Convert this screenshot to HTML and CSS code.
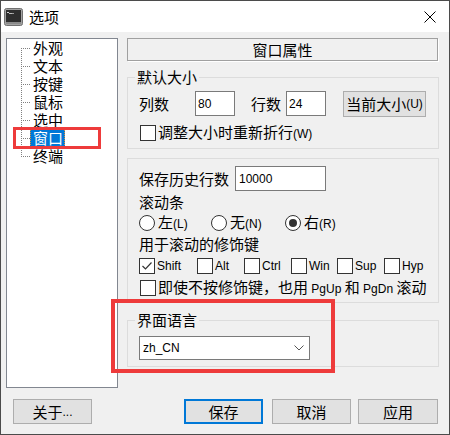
FILE: index.html
```html
<!DOCTYPE html>
<html lang="zh-CN">
<head>
<meta charset="utf-8">
<title>选项</title>
<link rel="stylesheet" href="styles.css">
</head>
<body>
<div class="window">
  <div class="titlebar">
    <svg class="app-icon" width="19" height="18" viewBox="0 0 19 18">
      <rect x="0.5" y="0.5" width="18" height="17" rx="2" fill="#a3a3a3" stroke="#707070"/>
      <rect x="2" y="2" width="15" height="12" fill="#2e2e2e"/>
      <rect x="3" y="4" width="2" height="1" fill="#d0d0d0"/>
      <rect x="5" y="5" width="3" height="1" fill="#bdbdbd"/>
      <rect x="8" y="5" width="2" height="1" fill="#9a9a9a"/>
      <rect x="2" y="14" width="15" height="2" fill="#8a8a8a"/>
    </svg>
    <span class="title">选项</span>
    <svg class="close" width="12" height="12" viewBox="0 0 12 12">
      <path d="M0.5 0.5 L11.5 11.5 M11.5 0.5 L0.5 11.5" stroke="#000" stroke-width="1" fill="none"/>
    </svg>
  </div>
  <div class="body">
    <div class="main">
      <div class="tree">
        <ul class="tree-list">
          <li class="node"><span class="label">外观</span></li>
          <li class="node"><span class="label">文本</span></li>
          <li class="node"><span class="label">按键</span></li>
          <li class="node"><span class="label">鼠标</span></li>
          <li class="node"><span class="label">选中</span></li>
          <li class="node selected"><span class="label">窗口</span></li>
          <li class="node"><span class="label">终端</span></li>
        </ul>
      </div>
      <div class="panel">
        <div class="panel-header">窗口属性</div>

        <fieldset class="group group-size">
          <legend>默认大小</legend>
          <div class="row row-size">
            <span class="txt">列数</span>
            <span class="field field-cols"><span class="en">80</span></span>
            <span class="txt rows-label">行数</span>
            <span class="field field-rows"><span class="en">24</span></span>
            <span class="btn btn-size">当前大小<span class="en">(U)</span></span>
          </div>
          <div class="row row-wrap">
            <span class="check"></span>
            <span class="txt">调整大小时重新折行<span class="en">(W)</span></span>
          </div>
        </fieldset>

        <fieldset class="group group-scroll">
          <div class="row row-history">
            <span class="txt">保存历史行数</span>
            <span class="field field-history"><span class="en">10000</span></span>
          </div>
          <div class="row row-h22"><span class="txt">滚动条</span></div>
          <div class="row row-radios">
            <span class="opt opt-left"><span class="radio"></span><span class="txt">左<span class="en">(L)</span></span></span>
            <span class="opt opt-none"><span class="radio"></span><span class="txt">无<span class="en">(N)</span></span></span>
            <span class="opt"><span class="radio on"></span><span class="txt">右<span class="en">(R)</span></span></span>
          </div>
          <div class="row row-h22"><span class="txt">用于滚动的修饰键</span></div>
          <div class="row row-h22 row-mods">
            <span class="mod mod-shift"><span class="check"><svg width="14" height="14" viewBox="0 0 14 14"><path d="M2.5 7 L5.5 10 L11.5 3.5" stroke="#333" stroke-width="1.2" fill="none"/></svg></span><span class="en">Shift</span></span>
            <span class="mod mod-47"><span class="check"></span><span class="en">Alt</span></span>
            <span class="mod mod-47"><span class="check"></span><span class="en">Ctrl</span></span>
            <span class="mod mod-46"><span class="check"></span><span class="en">Win</span></span>
            <span class="mod mod-47"><span class="check"></span><span class="en">Sup</span></span>
            <span class="mod"><span class="check"></span><span class="en">Hyp</span></span>
          </div>
          <div class="row row-h22 row-always">
            <span class="check"></span>
            <span class="txt">即使不按修饰键，也用<span class="en"> PgUp </span>和<span class="en"> PgDn </span>滚动</span>
          </div>
        </fieldset>

        <fieldset class="group group-lang">
          <legend>界面语言</legend>
          <div class="select">
            <span class="en">zh_CN</span>
            <svg width="10" height="6" viewBox="0 0 10 6"><path d="M0.5 0.5 L5 5 L9.5 0.5" stroke="#555" stroke-width="1" fill="none"/></svg>
          </div>
        </fieldset>
      </div>
    </div>
    <div class="footer">
      <span class="btn btn-foot">关于<span class="en">...</span></span>
      <span class="btn btn-foot btn-default">保存</span>
      <span class="btn btn-foot btn-cancel">取消</span>
      <span class="btn btn-foot btn-apply">应用</span>
    </div>
  </div>
  <div class="mark mark-tree"></div>
  <div class="mark mark-lang"></div>
</div>
</body>
</html>
```

FILE: styles.css
```css
* { box-sizing: border-box; }
html, body { margin: 0; padding: 0; }
body {
  width: 450px;
  height: 435px;
  overflow: hidden;
  background: #fff;
  color: #000;
  font-family: "Noto Sans CJK SC", sans-serif;
  font-size: 15px;
}
.en {
  font-family: "Liberation Sans", Arial, sans-serif;
  font-size: 12px;
  white-space: pre;
}
.window {
  position: relative;
  width: 450px;
  height: 435px;
  border: 1px solid #4b4b4b;
  display: flex;
  flex-direction: column;
}
.titlebar {
  flex: none;
  height: 31px;
  background: #fff;
  display: flex;
  align-items: center;
}
.app-icon { margin-left: 3px; margin-top: 1px; flex: none; }
.title { margin-left: 6px; line-height: 20px; }
.close { margin-left: auto; margin-right: 13px; flex: none; }

.body {
  flex: 1;
  background: #f0f0f0;
  padding: 6px 10px 0 5px;
  display: flex;
  flex-direction: column;
}
.main {
  display: flex;
  gap: 9px;
  height: 350px;
  flex: none;
}

/* tree */
.tree {
  width: 112px;
  flex: none;
  background: #fff;
  border: 1px solid #828790;
}
.tree-list {
  list-style: none;
  margin: 0;
  padding: 0 0 0 14px;
  background-image: repeating-linear-gradient(to bottom, #808080 0 1px, transparent 1px 2px);
  background-size: 1px 108px;
  background-position: 14px 9px;
  background-repeat: no-repeat;
}
.node {
  height: 18px;
  display: flex;
  align-items: center;
}
.node::before {
  content: "";
  width: 9px;
  height: 1px;
  flex: none;
  background-image: repeating-linear-gradient(to right, #808080 0 1px, transparent 1px 2px);
}
.label {
  line-height: 18px;
  height: 18px;
  padding: 0 2px 0 3px;
  display: block;
}
.selected .label {
  background: #0078d7;
  color: #fff;
  outline: 1px dotted #d89040;
  outline-offset: -1px;
}

/* panel */
.panel {
  width: 312px;
  flex: none;
  display: flex;
  flex-direction: column;
}
.panel-header {
  height: 23px;
  margin-right: 1px;
  border: 1px solid #a0a0a0;
  box-shadow: 1px 1px 0 #fff;
  display: flex;
  align-items: center;
  justify-content: center;
  line-height: 20px;
}
.group {
  margin: 0;
  min-width: 0;
  border: 1px solid #dcdcdc;
  padding: 0 10px 0 11px;
}
.group legend {
  padding: 0 2px;
  margin-left: -4px;
  line-height: 18px;
}
.group-size { margin-top: 7px; padding-top: 5px; padding-bottom: 5px; }
.group-scroll { margin-top: 9px; padding-top: 7px; padding-bottom: 3px; }
.group-lang { margin-top: 8px; padding-top: 7px; padding-bottom: 6px; }

.row { display: flex; align-items: center; }
.txt { line-height: 20px; white-space: nowrap; }
.row-size { height: 26px; align-items: flex-start; }
.row-size .txt { line-height: 25px; }
.row-wrap { height: 20px; margin-top: 6px; }
.row-history { height: 25px; }
.row-h22 { height: 22px; }
.row-radios { height: 20px; }

.field {
  height: 25px;
  background: #fff;
  border: 1px solid #7a7a7a;
  padding-left: 2px;
  display: flex;
  align-items: center;
}
.field-cols { width: 40px; margin-left: 26px; }
.rows-label { margin-left: 16px; }
.field-rows { width: 40px; margin-left: 5px; }
.field-history { width: 91px; margin-left: 6px; padding-left: 3px; }

.btn {
  background: #e1e1e1;
  border: 1px solid #adadad;
  display: flex;
  align-items: center;
  justify-content: center;
  white-space: nowrap;
  line-height: 20px;
}
.btn-size { width: 83px; height: 26px; margin-left: 17px; }

.check {
  width: 16px;
  height: 16px;
  flex: none;
  background: #fff;
  border: 1px solid #333;
  display: flex;
  align-items: center;
  justify-content: center;
}
.row-wrap .check, .row-always .check { margin-left: 1px; margin-right: 2px; }

.opt { display: flex; align-items: center; gap: 3px; }
.opt-left { width: 72px; }
.opt-none { width: 74px; }
.radio {
  width: 16px;
  height: 16px;
  flex: none;
  border-radius: 50%;
  border: 1px solid #333;
  background: #fff;
  display: flex;
  align-items: center;
  justify-content: center;
}
.radio.on::after {
  content: "";
  width: 8px;
  height: 8px;
  border-radius: 50%;
  background: #333;
}

.mod { display: flex; align-items: center; gap: 2px; }
.mod-shift { width: 58px; }
.mod-47 { width: 47px; }
.mod-46 { width: 46px; }

.select {
  width: 171px;
  height: 24px;
  background: #fff;
  border: 1px solid #7a7a7a;
  display: flex;
  align-items: center;
  justify-content: space-between;
  padding: 0 5px 0 3px;
}

/* footer */
.footer {
  display: flex;
  margin-top: 11px;
  padding: 0 1px 0 7px;
}
.btn-foot { width: 79px; height: 25px; }
.btn-default { margin-left: auto; border: 2px solid #0078d7; }
.btn-cancel { margin-left: 9px; }
.btn-apply { margin-left: 7px; width: 80px; }

/* annotation marks */
.mark {
  position: absolute;
  border: 3px solid #ee3b3b;
  pointer-events: none;
}
.mark-tree { left: 12px; top: 126px; width: 88px; height: 22px; }
.mark-lang { left: 110px; top: 298px; width: 224px; height: 74px; border-width: 4px; }
```
